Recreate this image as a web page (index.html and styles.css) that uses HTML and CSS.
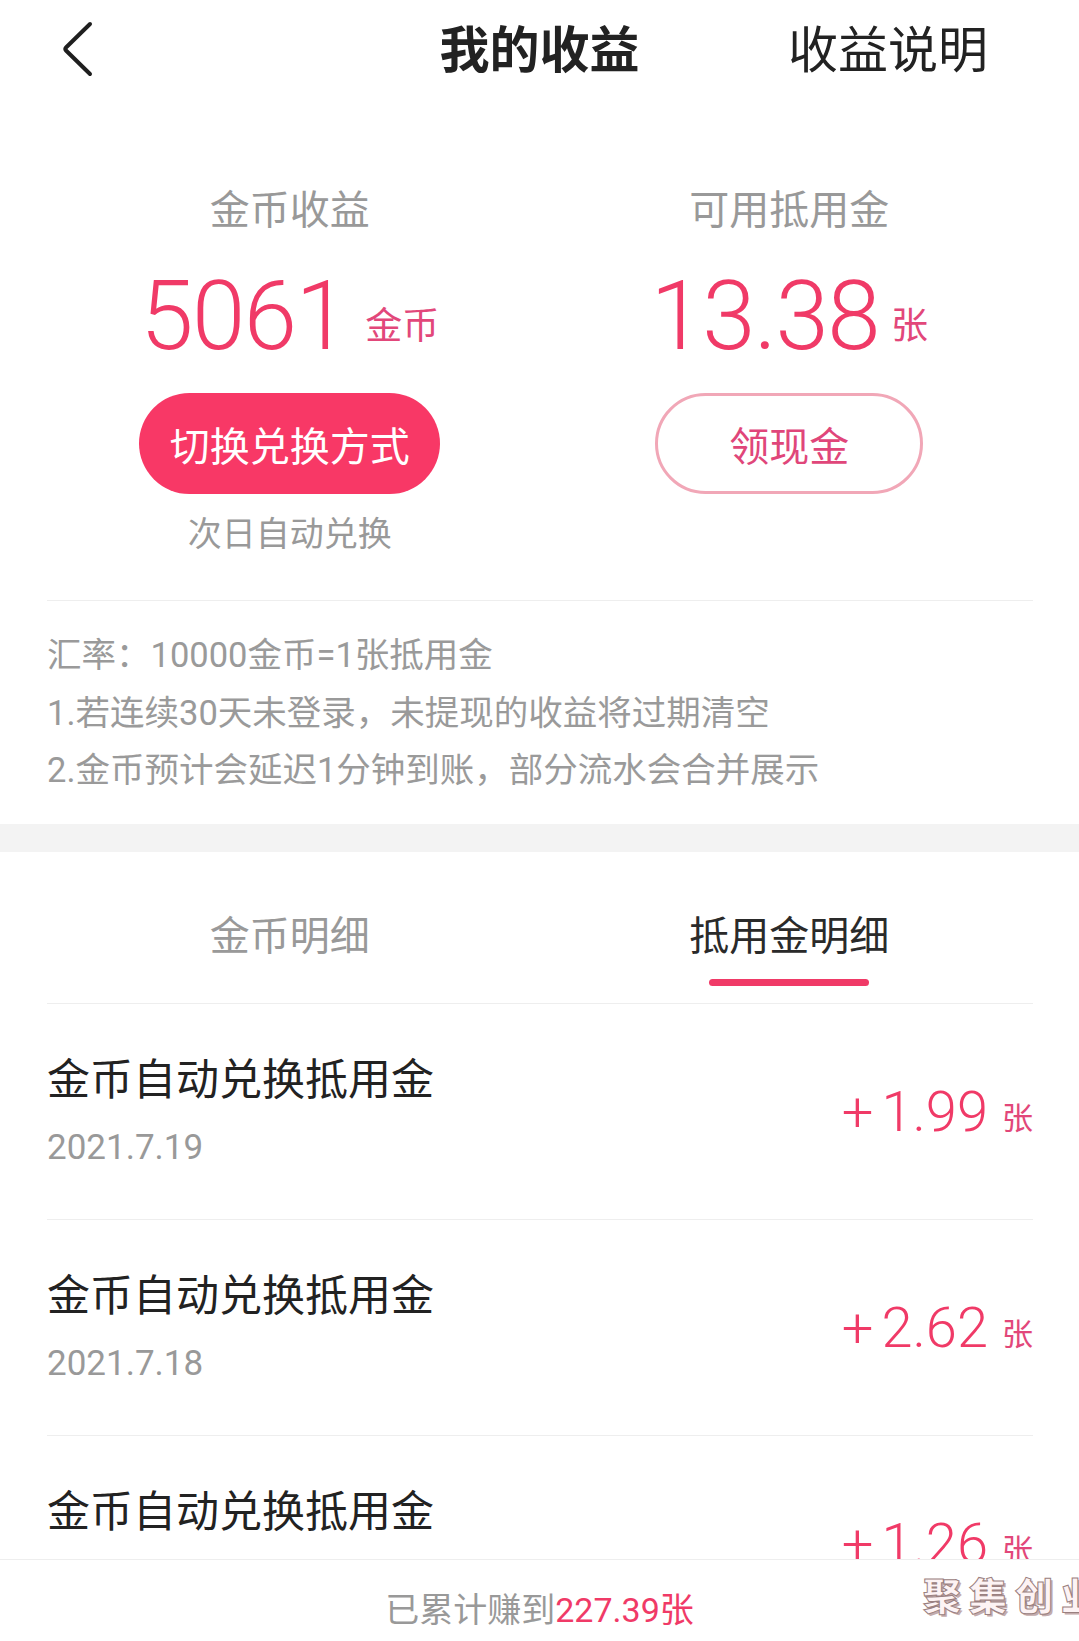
FILE: index.html
```
<!DOCTYPE html>
<html lang="zh-CN">
<head>
    <meta charset="UTF-8">
    <meta name="viewport" content="width=device-width, initial-scale=1.0">
    <title>我的收益</title>
    <link rel="stylesheet" href="styles.css">
</head>
<body>

    <div class="nav">
        <div class="nav-back">
            <svg width="40" height="60" viewBox="0 0 40 60">
                <path d="M30 3 L6 26.5 Q4.5 28 6 29.5 L30 53" fill="none" stroke="#1f1f1f" stroke-width="4" stroke-linecap="round" stroke-linejoin="round"/>
            </svg>
        </div>
        <div class="nav-title">我的收益</div>
        <div class="nav-link">收益说明</div>
    </div>

    <div class="stats">
        <div class="stat">
            <div class="stat-label">金币收益</div>
            <div class="stat-value">5061<span class="unit unit-coin">金币</span></div>
            <div class="btn btn-fill">切换兑换方式</div>
            <div class="stat-note">次日自动兑换</div>
        </div>
        <div class="stat">
            <div class="stat-label">可用抵用金</div>
            <div class="stat-value">13.38<span class="unit">张</span></div>
            <div class="btn btn-line">领现金</div>
        </div>
    </div>

    <div class="rules">
        <p>汇率：10000金币=1张抵用金</p>
        <p>1.若连续30天未登录，未提现的收益将过期清空</p>
        <p>2.金币预计会延迟1分钟到账，部分流水会合并展示</p>
    </div>

    <div class="band"></div>

    <div class="tabs">
        <div class="tab">
            <span>金币明细</span>
            <i class="tab-bar"></i>
        </div>
        <div class="tab active">
            <span>抵用金明细</span>
            <i class="tab-bar"></i>
        </div>
    </div>

    <div class="records">
        <div class="record">
            <div class="record-info">
                <div class="record-title">金币自动兑换抵用金</div>
                <div class="record-date">2021.7.19</div>
            </div>
            <div class="record-amount"><span class="plus">+</span>1.99<span class="unit">张</span></div>
        </div>
        <div class="record">
            <div class="record-info">
                <div class="record-title">金币自动兑换抵用金</div>
                <div class="record-date">2021.7.18</div>
            </div>
            <div class="record-amount"><span class="plus">+</span>2.62<span class="unit">张</span></div>
        </div>
        <div class="record">
            <div class="record-info">
                <div class="record-title">金币自动兑换抵用金</div>
                <div class="record-date">2021.7.17</div>
            </div>
            <div class="record-amount"><span class="plus">+</span>1.26<span class="unit">张</span></div>
        </div>
    </div>

    <div class="footer">
        已累计赚到<span class="total">227.39张</span>
        <div class="watermark">聚集创业</div>
    </div>

</body>
</html>
```

FILE: styles.css
```
* {
    box-sizing: border-box;
}

body {
    margin: 0;
    height: 1641px;
    overflow: hidden;
    display: flex;
    flex-direction: column;
    font-family: Roboto, "Noto Sans CJK SC", sans-serif;
    background: #fff;
    color: #222;
}

/* top bar */
.nav {
    height: 98px;
    padding: 4px 60px 0;
    display: grid;
    grid-template-columns: 1fr auto 1fr;
    align-items: center;
    flex-shrink: 0;
}

.nav-back svg {
    display: block;
}

.nav-title {
    font-size: 50px;
    line-height: 50px;
    font-weight: 700;
    color: #222;
}

.nav-link {
    justify-self: end;
    padding-right: 31px;
    font-size: 50px;
    line-height: 50px;
    color: #222;
}

/* balances */
.stats {
    display: grid;
    grid-template-columns: 1fr 1fr;
    padding: 93px 40px 50px;
    flex-shrink: 0;
    position: relative;
}

.stats::after {
    content: "";
    position: absolute;
    left: 47px;
    right: 46px;
    bottom: 0;
    border-bottom: 1px solid #eeeeee;
}

.stat {
    display: flex;
    flex-direction: column;
    align-items: center;
}

.stat-label {
    font-size: 40px;
    line-height: 40px;
    color: #999;
}

.stat-value {
    margin-top: 37px;
    font-size: 96px;
    line-height: 96px;
    height: 96px;
    font-weight: 300;
    letter-spacing: -1.5px;
    color: #f03a67;
    white-space: nowrap;
}

.unit {
    font-size: 37px;
    line-height: 37px;
    font-weight: 400;
    letter-spacing: 0;
    margin-left: 12px;
    vertical-align: 10px;
    color: #e2477a;
}

.unit-coin {
    margin-left: 18px;
}

.btn {
    margin-top: 29px;
    height: 101px;
    border-radius: 51px;
    display: flex;
    align-items: center;
    justify-content: center;
    font-size: 40px;
}

.btn-fill {
    width: 301px;
    background: #f83866;
    color: #fff;
}

.btn-line {
    width: 268px;
    border: 3px solid #f1a7b7;
    color: #e0467a;
}

.stat-note {
    margin-top: 23px;
    font-size: 34px;
    line-height: 34px;
    color: #999;
}

/* notes */
.rules {
    padding: 26px 47px 24px;
    flex-shrink: 0;
}

.rules p {
    margin: 0;
    font-size: 34.5px;
    line-height: 57.5px;
    color: #9a9a9a;
}

.band {
    height: 28px;
    background: #f3f3f3;
    flex-shrink: 0;
}

/* tabs */
.tabs {
    display: grid;
    grid-template-columns: 1fr 1fr;
    padding: 65px 40px 0;
    flex-shrink: 0;
    position: relative;
}

.tabs::after {
    content: "";
    position: absolute;
    left: 47px;
    right: 46px;
    bottom: 0;
    border-bottom: 1px solid #eeeeee;
}

.tab {
    display: flex;
    flex-direction: column;
    align-items: center;
    font-size: 40px;
    line-height: 40px;
    color: #999;
    padding-bottom: 18px;
}

.tab-bar {
    margin-top: 22px;
    width: 160px;
    height: 7px;
    border-radius: 4px;
    background: transparent;
}

.tab.active {
    color: #2a2a2a;
}

.tab.active .tab-bar {
    background: #f03a67;
}

/* records */
.records {
    flex: 1;
    overflow: hidden;
    padding: 0 46px 0 47px;
}

.record {
    display: flex;
    align-items: center;
    justify-content: space-between;
    padding: 55px 0 54px;
    border-bottom: 1px solid #eeeeee;
}

.record-title {
    font-size: 43px;
    line-height: 43px;
    color: #222;
}

.record-date {
    margin-top: 28px;
    font-size: 35px;
    line-height: 35px;
    color: #999;
}

.record-amount {
    font-size: 56px;
    line-height: 56px;
    font-weight: 300;
    color: #f03a67;
    white-space: nowrap;
}

.plus {
    margin-right: 8px;
}

.record-amount .unit {
    font-size: 31px;
    margin-left: 14px;
    vertical-align: 2px;
}

/* bottom total */
.footer {
    height: 82px;
    flex-shrink: 0;
    border-top: 1px solid #eeeeee;
    padding-top: 33px;
    text-align: center;
    font-size: 34px;
    line-height: 34px;
    color: #999;
    background: #fff;
    position: relative;
}

.total {
    color: #f03a67;
}

.watermark {
    position: absolute;
    right: -28px;
    top: 18px;
    font-size: 38px;
    line-height: 38px;
    font-weight: 900;
    letter-spacing: 8px;
    color: #fdf3f4;
    -webkit-text-stroke: 1px #9a8080;
    text-shadow: 2px 2px 0 #c4acac;
}
```
